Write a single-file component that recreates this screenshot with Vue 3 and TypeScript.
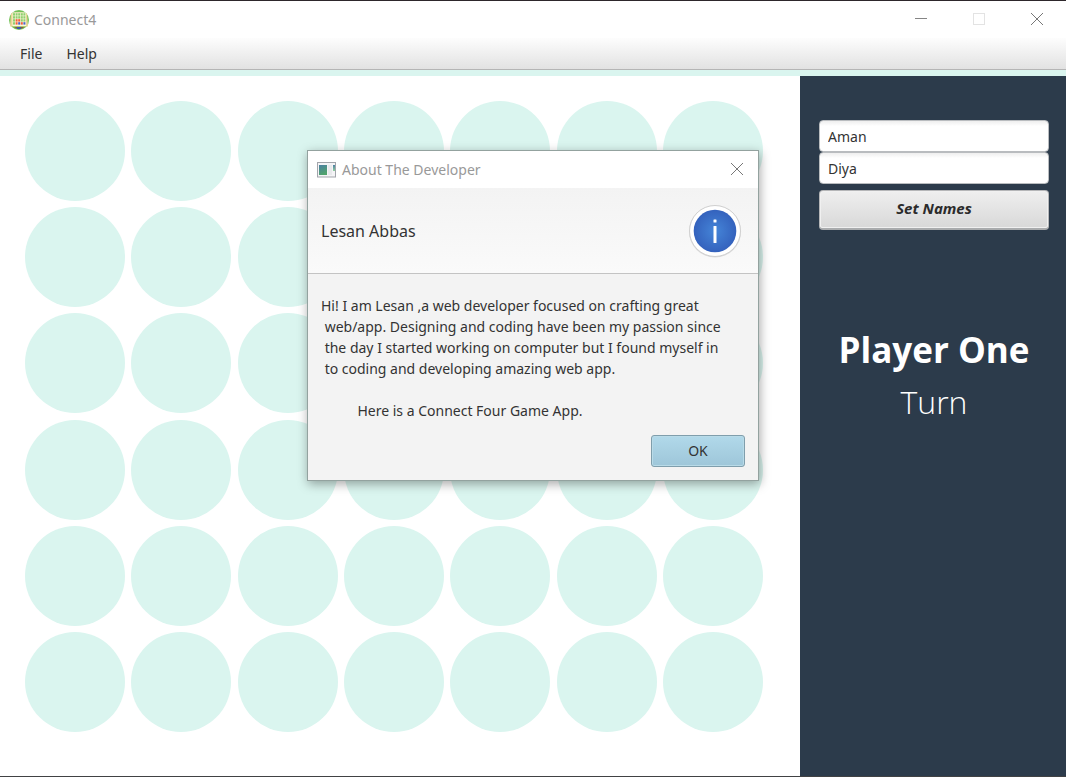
<script setup lang="ts">
import { ref } from 'vue'

const rows = 6
const columns = 7
const playerOne = ref('Aman')
const playerTwo = ref('Diya')
const currentPlayer = ref('Player One')
const aboutOpen = ref(true)

const aboutText = [
  'Hi! I am Lesan ,a web developer focused on crafting great',
  ' web/app. Designing and coding have been my passion since',
  ' the day I started working on computer but I found myself in',
  ' to coding and developing amazing web app.',
  '',
  '          Here is a Connect Four Game App.',
].join('\n')

const iconDots = Array.from({ length: 20 }, (_, i) => {
  const col = i % 5
  const row = Math.floor(i / 5)
  const palette: Record<number, string> = {
    11: '#f0603a', 12: '#f0603a', 16: '#f0603a', 17: '#4a62c8', 18: '#f0603a', 19: '#4a62c8',
  }
  return { x: 4 + col * 2.6, y: 3.2 + row * 3, fill: palette[i] ?? '#8fd070' }
})
</script>

<template>
  <div class="window">
    <header class="titlebar">
      <svg class="app-icon" viewBox="0 0 20 20" aria-hidden="true">
        <circle cx="10" cy="10" r="10" fill="#74c258" />
        <path d="M2 3.5Q10 1 18 3.5L19 16.500H1Z" fill="#ead596" />
        <rect x="3.500" y="2.500" width="13.500" height="13.500" fill="#fbf7dc" />
        <rect v-for="(dot, i) in iconDots" :key="i" :x="dot.x" :y="dot.y" width="2" height="2.400" :fill="dot.fill" />
        <path d="M5 17H15.500Q10 21 5 17Z" fill="#8a5a3c" />
        <rect x="8" y="17" width="4" height="2" fill="#4156ae" />
      </svg>
      <span class="title">Connect4</span>
      <div class="controls">
        <button type="button" aria-label="Minimize">
          <svg viewBox="0 0 12 12"><path d="M0 5.500H12" stroke="#858585" /></svg>
        </button>
        <button type="button" aria-label="Maximize" disabled>
          <svg viewBox="0 0 12 12"><rect x=".5" y=".5" width="11" height="11" fill="none" stroke="#e3e3e3" /></svg>
        </button>
        <button type="button" aria-label="Close">
          <svg viewBox="0 0 12 12"><path d="M0 0L12 12M12 0L0 12" stroke="#777" /></svg>
        </button>
      </div>
    </header>

    <nav class="menubar">
      <button type="button">File</button>
      <button type="button" @click="aboutOpen = true">Help</button>
    </nav>

    <main class="game">
      <section class="board-area" aria-label="Board">
        <div class="board">
          <span v-for="n in rows * columns" :key="n" class="slot"></span>
        </div>
      </section>

      <aside class="panel">
        <form class="names" @submit.prevent>
          <input v-model="playerOne" type="text" aria-label="Player one name" />
          <input v-model="playerTwo" type="text" aria-label="Player two name" />
          <button type="submit">Set Names</button>
        </form>
        <p class="player">{{ currentPlayer }}</p>
        <p class="turn">Turn</p>
      </aside>
    </main>

    <div v-if="aboutOpen" class="dialog" role="dialog" aria-labelledby="about-title">
      <div class="dialog-title">
        <svg class="dialog-icon" viewBox="0 0 19 16" aria-hidden="true">
          <defs>
            <linearGradient id="tile" x1="0" y1="0" x2=".4" y2="1">
              <stop offset="0" stop-color="#4a7fa3" />
              <stop offset="1" stop-color="#50a36c" />
            </linearGradient>
            <linearGradient id="strip" x1="0" y1="0" x2="0" y2="1">
              <stop offset="0" stop-color="#4a7fa3" />
              <stop offset="1" stop-color="#8fcf9c" />
            </linearGradient>
          </defs>
          <rect x=".5" y=".5" width="18" height="14.500" fill="#f4f4f6" stroke="#a2a5ab" />
          <rect x="2" y="3" width="8" height="10" fill="url(#tile)" />
          <rect x="11" y="3" width="4" height="10" fill="#e8e9ec" />
          <rect x="16" y="3" width="2" height="6" fill="url(#strip)" />
        </svg>
        <span id="about-title">About The Developer</span>
        <button type="button" aria-label="Close dialog" @click="aboutOpen = false">
          <svg viewBox="0 0 12 12"><path d="M0 0L12 12M12 0L0 12" stroke="#777" /></svg>
        </button>
      </div>
      <div class="dialog-header">
        <h2>Lesan Abbas</h2>
        <svg class="info" viewBox="0 0 54 54" aria-hidden="true">
          <defs>
            <radialGradient id="blue">
              <stop offset="0" stop-color="#4585d8" />
              <stop offset="1" stop-color="#3462bd" />
            </radialGradient>
          </defs>
          <circle cx="27" cy="27.500" r="26" fill="#dcdcdc" />
          <circle cx="27" cy="27" r="25.500" fill="#fff" stroke="#d0d0d0" />
          <circle cx="27" cy="27" r="21.300" fill="url(#blue)" />
          <rect x="25.500" y="15.500" width="3" height="3" rx=".5" fill="#fff" />
          <rect x="25.500" y="22" width="3" height="17" rx=".5" fill="#fff" />
        </svg>
      </div>
      <p class="about">{{ aboutText }}</p>
      <div class="actions">
        <button type="button" @click="aboutOpen = false">OK</button>
      </div>
    </div>
  </div>
</template>

<style>
body {
  margin: 0;
}
</style>

<style scoped>
.window {
  position: relative;
  display: flex;
  flex-direction: column;
  box-sizing: border-box;
  min-height: 100vh;
  border-top: 1px solid #2d272b;
  border-bottom: 1px solid #414244;
  background: #fff;
  color: #333;
  font-family: "Noto Sans", "Open Sans", sans-serif;
  font-size: 14px;
}

button {
  font: inherit;
  color: inherit;
}

svg {
  display: block;
}

.titlebar {
  display: flex;
  align-items: center;
  height: 37px;
  padding-left: 9px;
  color: #999;
}

.app-icon {
  width: 20px;
  height: 20px;
}

.title {
  margin-left: 5px;
}

.controls {
  display: flex;
  align-self: flex-start;
  margin-left: auto;
}

.controls button {
  display: grid;
  place-items: center;
  width: 58px;
  height: 36px;
  padding: 0;
  border: 0;
  background: none;
}

.controls svg,
.dialog-title button svg {
  width: 12px;
  height: 12px;
}

.menubar {
  display: flex;
  box-sizing: border-box;
  height: 32px;
  padding-left: 8px;
  border-bottom: 1px solid #b5b5b5;
  background: linear-gradient(#fdfdfd, #e2e2e2);
}

.menubar button {
  padding: 0 12px;
  border: 0;
  background: none;
}

.game {
  display: flex;
  flex: 1;
  border-top: 6px solid #daf5ef;
}

.board-area {
  flex: 1;
  padding: 25px 37px 44px 25px;
}

.board {
  display: grid;
  grid-template-columns: repeat(7, 100px);
  grid-template-rows: repeat(6, 100px);
  justify-content: space-between;
  align-content: space-between;
  height: 100%;
}

.slot {
  border-radius: 50%;
  background: #daf5ef;
}

.panel {
  box-sizing: border-box;
  width: 266px;
  padding: 44px 17px 0 19px;
  background: #2c3b4b;
  color: #fff;
  text-align: center;
}

.names {
  display: flex;
  flex-direction: column;
}

.names input {
  box-sizing: border-box;
  width: 100%;
  height: 32px;
  padding: 0 8px;
  border: 1px solid #b9bcbf;
  border-radius: 4px;
  background: linear-gradient(#eee, #fff 5px);
  color: #333;
  font: inherit;
  outline: 0;
}

.names button {
  height: 40px;
  margin-top: 6px;
  padding: 0 0 3px;
  border: 1px solid #b5b6b8;
  border-bottom: 2px solid #a9abad;
  border-radius: 4px;
  background: linear-gradient(#efefef, #d8d8d8);
  box-shadow: inset 0 0 0 1px #f0f0f0;
  color: #2b2b2b;
  font-size: 15px;
  font-weight: 700;
  font-style: italic;
}

.player,
.turn {
  margin: 0;
  font-family: "Open Sans", "Noto Sans", sans-serif;
}

.player {
  margin-top: 95px;
  font-size: 35px;
  font-weight: 700;
  line-height: 50px;
}

.turn {
  font-size: 32px;
  font-weight: 300;
  line-height: 54px;
}

.dialog {
  position: absolute;
  top: 149px;
  left: 50%;
  box-sizing: border-box;
  width: 452px;
  border: 1px solid #93a29f;
  background: #f3f3f3;
  box-shadow: 1px 3px 10px rgba(0, 0, 0, 0.35);
  transform: translateX(-50%);
}

.dialog-title {
  display: flex;
  align-items: center;
  height: 37px;
  padding-left: 9px;
  background: #fff;
  color: #999;
}

.dialog-icon {
  width: 19px;
  height: 16px;
}

.dialog-title span {
  margin-left: 6px;
}

.dialog-title button {
  display: grid;
  place-items: center;
  align-self: flex-start;
  width: 42px;
  height: 36px;
  margin-left: auto;
  padding: 0;
  border: 0;
  background: none;
}

.dialog-header {
  display: flex;
  align-items: center;
  justify-content: space-between;
  box-sizing: border-box;
  height: 86px;
  padding: 0 16px 0 13px;
  border-bottom: 1px solid #c3c3c3;
  background: linear-gradient(#f3f3f3, #fafafa);
}

.dialog-header h2 {
  margin: 0;
  font-size: 16px;
  font-weight: 400;
}

.info {
  width: 54px;
  height: 54px;
}

.about {
  margin: 21px 13px 0;
  line-height: 21px;
  white-space: pre;
}

.actions {
  display: flex;
  justify-content: flex-end;
  padding: 14px 13px 13px;
}

.actions button {
  width: 94px;
  height: 32px;
  padding: 0 0 2px;
  border: 1px solid #7f9eac;
  border-radius: 3px;
  background: linear-gradient(#b1d9ea, #9ec6d9);
  box-shadow: inset 0 0 0 1px #b9dbe8;
}
</style>
